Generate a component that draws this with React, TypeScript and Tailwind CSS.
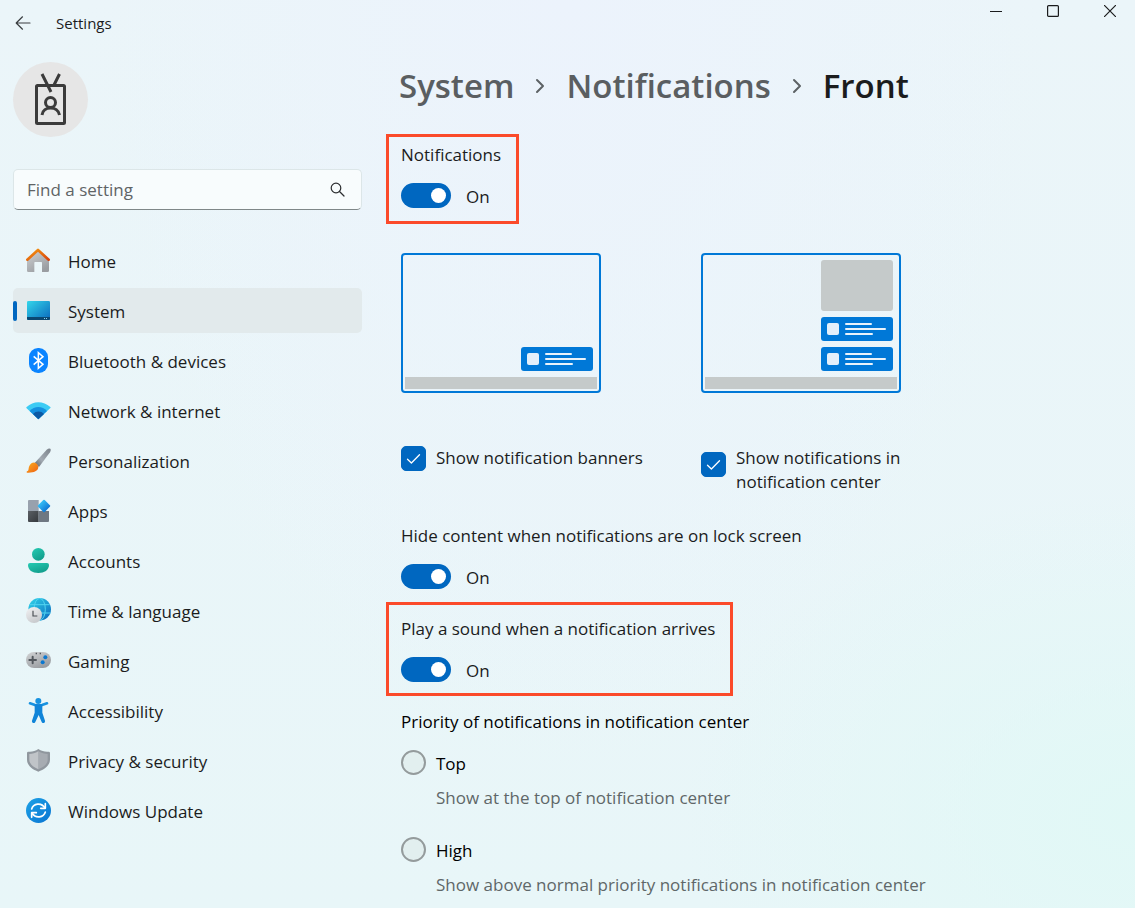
import { useState } from "react";
import type { ReactNode } from "react";

const navItems: { label: string; icon: ReactNode }[] = [
  {
    label: "Home",
    icon: (
      <>
        <path d="M3 34 L36 6 L69 34 V68 Q69 72 65 72 H48 V44 Q48 42 46 42 H27 Q25 42 25 44 V72 H7 Q3 72 3 68 Z" fill="url(#grayDown)" />
        <path d="M4 35 L36 6 L68 35" fill="none" stroke="url(#roof)" strokeWidth="8" strokeLinecap="round" strokeLinejoin="round" />
      </>
    ),
  },
  {
    label: "System",
    icon: (
      <>
        <rect x="3" y="9" width="69" height="57" rx="4" fill="url(#screen)" />
        <path d="M3 57 H72 V62 Q72 66 68 66 H7 Q3 66 3 62 Z" fill="#0b4872" />
        <rect x="54" y="60" width="3" height="3" fill="#8fd3ef" />
        <rect x="60" y="60" width="3" height="3" fill="#8fd3ef" />
      </>
    ),
  },
  {
    label: "Bluetooth & devices",
    icon: (
      <>
        <rect x="9" y="0" width="57" height="75" rx="27" fill="#0a84ff" />
        <path d="M23 25 L51 49 L37 61 V14 L51 26 L23 50" fill="none" stroke="#fff" strokeWidth="4.5" strokeLinejoin="miter" />
      </>
    ),
  },
  {
    label: "Network & internet",
    icon: (
      <>
        <path d="M37 64 L1 30 Q0 28 2 27 C22 8 52 8 73 27 Q75 28 73 30 Z" fill="#3bcbf4" />
        <path d="M37 64 L11 39 C25 23 49 23 63 39 Z" fill="#1490df" />
        <path d="M37 64 L21 48 C30 38 45 38 54 48 Z" fill="#0c59a4" />
      </>
    ),
  },
  {
    label: "Personalization",
    icon: (
      <>
        <path d="M26 45 L62 5 Q68 0 73 2 Q76 6 72 13 L39 57 Z" fill="url(#grayBrush)" />
        <path d="M26 44 C32 45 37 51 37 58 C36 70 22 75 3 74 Q0 73 3 70 C9 68 7 62 9 56 C12 48 19 43 26 44 Z" fill="url(#bristle)" />
      </>
    ),
  },
  {
    label: "Apps",
    icon: (
      <>
        <path d="M9 6 H38 V39 H6 V9 Q6 6 9 6 Z" fill="#98a1ad" />
        <path d="M6 39 H38 V72 H9 Q6 72 6 69 Z" fill="url(#grayDark)" />
        <path d="M38 39 H69 V69 Q69 72 66 72 H38 Z" fill="#6f7882" />
        <rect x="40" y="10" width="28" height="28" rx="3" transform="rotate(45 54 24)" fill="url(#blue)" />
      </>
    ),
  },
  {
    label: "Accounts",
    icon: (
      <>
        <circle cx="37" cy="19" r="19" fill="url(#teal)" />
        <path d="M12 45 H63 Q69 45 69 51 C69 66 55 75 37 75 C19 75 6 66 6 51 Q6 45 12 45 Z" fill="url(#teal)" />
      </>
    ),
  },
  {
    label: "Time & language",
    icon: (
      <>
        <circle cx="41" cy="34" r="34" fill="url(#screen)" />
        <g fill="none" stroke="#52d5f0" strokeWidth="3">
          <ellipse cx="41" cy="34" rx="17" ry="33" />
          <path d="M11 20 H71 M8 45 H74" />
        </g>
        <circle cx="24" cy="51" r="24" fill="url(#clock)" />
        <path d="M21 38 V54 H34" fill="none" stroke="#4b4f54" strokeWidth="3.5" />
      </>
    ),
  },
  {
    label: "Gaming",
    icon: (
      <>
        <rect x="0" y="12" width="75" height="48" rx="24" fill="url(#grayDown)" />
        <path d="M20 26 V46 M10 36 H30" stroke="#52575d" strokeWidth="6" strokeLinecap="round" />
        <circle cx="58" cy="28" r="6" fill="#0b78d0" />
        <circle cx="50" cy="43" r="6" fill="#0b78d0" />
        <path d="M31 14 v5 M43 14 v5" stroke="#52575d" strokeWidth="4" />
      </>
    ),
  },
  {
    label: "Accessibility",
    icon: (
      <>
        <circle cx="37" cy="9" r="9" fill="#1792e0" />
        <path d="M12 16 L27 21 Q37 24 48 21 L63 16" fill="none" stroke="#1792e0" strokeWidth="8" strokeLinecap="round" />
        <path d="M26 19 H49 V44 L57 68 Q58 73 54 75 Q49 76 47 72 L38 51 L28 72 Q26 76 21 75 Q17 73 18 68 L26 44 Z" fill="#0f84d8" />
      </>
    ),
  },
  {
    label: "Privacy & security",
    icon: (
      <>
        <path d="M37 3 C47 10 58 12 68 11 Q72 11 72 15 V35 C72 52 56 64 37 71 C18 64 3 52 3 35 V15 Q3 11 7 11 C17 12 28 10 37 3 Z" fill="#90979e" />
        <path d="M37 10 C47 16 56 18 65 18 V35 C65 48 53 57 37 64 Z" fill="#a7acb2" />
        <path d="M37 10 C28 16 19 18 10 18 V35 C10 48 22 57 37 64 Z" fill="#c0c4c8" />
      </>
    ),
  },
  {
    label: "Windows Update",
    icon: (
      <>
        <circle cx="37.5" cy="37.5" r="37.5" fill="url(#update)" />
        <g fill="none" stroke="#fff" strokeWidth="5" strokeLinecap="round" strokeLinejoin="round">
          <path d="M17 33 C22 16 46 12 57 30" />
          <path d="M58 17 V31 H44" />
          <path d="M58 42 C53 59 29 63 18 45" />
          <path d="M17 58 V44 H31" />
        </g>
      </>
    ),
  },
];

// Gradients shared by the navigation icons
function IconGradients() {
  return (
    <svg width="0" height="0" className="absolute" aria-hidden="true">
      <defs>
        <linearGradient id="grayDown" x1="0" y1="0" x2="0.6" y2="1">
          <stop offset="0" stopColor="#d2d4d6" />
          <stop offset="1" stopColor="#9a9da1" />
        </linearGradient>
        <linearGradient id="roof" x1="0" y1="0" x2="1" y2="1">
          <stop offset="0" stopColor="#f59a12" />
          <stop offset="1" stopColor="#d8410b" />
        </linearGradient>
        <linearGradient id="screen" x1="0" y1="0" x2="1" y2="1">
          <stop offset="0" stopColor="#33d6ea" />
          <stop offset="1" stopColor="#0a68bd" />
        </linearGradient>
        <linearGradient id="grayBrush" x1="1" y1="0" x2="0" y2="1">
          <stop offset="0" stopColor="#7b838b" />
          <stop offset="0.6" stopColor="#a3abb3" />
          <stop offset="1" stopColor="#5a6168" />
        </linearGradient>
        <linearGradient id="bristle" x1="0" y1="0" x2="1" y2="1">
          <stop offset="0" stopColor="#fbb01f" />
          <stop offset="1" stopColor="#ee5f12" />
        </linearGradient>
        <linearGradient id="grayDark" x1="0" y1="0" x2="1" y2="1">
          <stop offset="0" stopColor="#5a5f64" />
          <stop offset="1" stopColor="#34383c" />
        </linearGradient>
        <linearGradient id="blue" x1="0" y1="0.5" x2="1" y2="0.5">
          <stop offset="0" stopColor="#33bdf5" />
          <stop offset="1" stopColor="#0f78d6" />
        </linearGradient>
        <linearGradient id="teal" x1="0" y1="0" x2="0.6" y2="1">
          <stop offset="0" stopColor="#25cbb3" />
          <stop offset="1" stopColor="#129e8c" />
        </linearGradient>
        <linearGradient id="clock" x1="0" y1="0" x2="0.5" y2="1">
          <stop offset="0" stopColor="#f3f3f4" />
          <stop offset="1" stopColor="#c9cbce" />
        </linearGradient>
        <linearGradient id="update" x1="0" y1="0" x2="1" y2="1">
          <stop offset="0" stopColor="#1ea2e6" />
          <stop offset="1" stopColor="#0874d2" />
        </linearGradient>
      </defs>
    </svg>
  );
}

function Toggle({ id, label, className = "" }: { id: string; label: string; className?: string }) {
  const [on, setOn] = useState(true);
  return (
    <div className={`w-fit ${className}`}>
      <label htmlFor={id} className="block">
        {label}
      </label>
      <div className="mt-4 flex h-[25px] items-center gap-[15px]">
        <input
          id={id}
          type="checkbox"
          role="switch"
          checked={on}
          onChange={(e) => setOn(e.target.checked)}
          className="flex h-[25px] w-[50px] appearance-none items-center rounded-full bg-[#8a9094] px-[5px] after:size-[15px] after:rounded-full after:bg-white checked:justify-end checked:bg-[#0067c0]"
        />
        <span className="pt-0.5">{on ? "On" : "Off"}</span>
      </div>
    </div>
  );
}

function Check({ id, label, boxClass = "" }: { id: string; label: string; boxClass?: string }) {
  return (
    <div className="flex w-[250px] items-start gap-[10px]">
      <span className={`grid shrink-0 ${boxClass}`}>
        <input
          id={id}
          type="checkbox"
          defaultChecked
          className="peer col-start-1 row-start-1 size-[25px] appearance-none rounded-[5px] border border-[#8a9094] checked:border-[#0067c0] checked:bg-[#0067c0]"
        />
        <svg
          viewBox="0 0 25 25"
          className="pointer-events-none invisible col-start-1 row-start-1 size-[25px] peer-checked:visible"
          fill="none"
          stroke="#fff"
          strokeWidth="1.3"
          strokeLinecap="round"
          strokeLinejoin="round"
        >
          <path d="M6.5 13.2 L10.4 17 L18.5 8.8" />
        </svg>
      </span>
      <label htmlFor={id}>{label}</label>
    </div>
  );
}

function Banner({ y }: { y: number }) {
  return (
    <g>
      <rect x="120" y={y} width="72" height="24" rx="3" fill="#0078d7" />
      <rect x="126" y={y + 6} width="12" height="12" rx="2" fill="#e3effa" />
      <g fill="#e9f3fb">
        <rect x="144" y={y + 6} width="27" height="2" rx="1" />
        <rect x="144" y={y + 11} width="41" height="2" rx="1" />
        <rect x="144" y={y + 16} width="28" height="2" rx="1" />
      </g>
    </g>
  );
}

function ScreenPreview({ center = false }: { center?: boolean }) {
  return (
    <svg viewBox="0 0 200 140" className="h-[140px] w-[200px]" aria-hidden="true">
      <rect x="1" y="1" width="198" height="138" rx="3" fill="none" stroke="#0078d7" strokeWidth="2" />
      <rect x="4" y="124" width="192" height="12" fill="#c5caca" />
      {center && <rect x="120" y="7" width="72" height="51" rx="3" fill="#c5caca" />}
      {center && <Banner y={64} />}
      <Banner y={94} />
    </svg>
  );
}

function Priority({ id, label, note }: { id: string; label: string; note: string }) {
  return (
    <div>
      <div className="flex h-[25px] items-center gap-[10px]">
        <input
          id={id}
          type="radio"
          name="priority"
          aria-describedby={`${id}-note`}
          className="size-[25px] appearance-none rounded-full border-2 border-[#949b9c] bg-[#e2efef] checked:border-[7px] checked:border-[#0067c0]"
        />
        <label htmlFor={id} className="pt-0.5 text-black">
          {label}
        </label>
      </div>
      <p id={`${id}-note`} className="mt-[11px] pl-[35px] text-[#5f6768]">
        {note}
      </p>
    </div>
  );
}

function Chevron() {
  return (
    <svg width="10" height="16" viewBox="0 0 10 16" fill="none" stroke="#5d6265" strokeWidth="2" strokeLinecap="round" strokeLinejoin="round" aria-hidden="true">
      <path d="M2 2 L8 8 L2 14" />
    </svg>
  );
}

export default function App() {
  return (
    <div className="flex min-h-screen flex-col bg-[radial-gradient(ellipse_at_100%_90%,#e1f8f6_0%,transparent_28%),radial-gradient(ellipse_at_50%_0%,#ecf3fc_0%,transparent_60%),linear-gradient(to_bottom,#ebf5f9,#e8f6f8)] font-['Open_Sans','Noto_Sans',sans-serif] text-[17px] leading-6 text-[#1b1c1d]">
      <IconGradients />
      {/* Title bar */}
      <header className="flex h-[45px] items-start justify-between">
        <div className="flex h-[45px] items-center gap-[25px] pl-[15px]">
          <button type="button" aria-label="Back">
            <svg width="16" height="16" viewBox="0 0 16 16" fill="none" stroke="#3a3d40" strokeWidth="1.2" strokeLinecap="round" strokeLinejoin="round">
              <path d="M15 8 H1.2 M7.5 1.8 L1.2 8 L7.5 14.2" />
            </svg>
          </button>
          <span className="text-[15px]">Settings</span>
        </div>
        <div className="flex h-[22px] items-center gap-[45px] pr-[19px]">
          <button type="button" aria-label="Minimize">
            <svg width="12" height="12" viewBox="0 0 12 12" stroke="#1b1c1d">
              <path d="M0 6.5 H12" />
            </svg>
          </button>
          <button type="button" aria-label="Maximize">
            <svg width="12" height="12" viewBox="0 0 12 12" fill="none" stroke="#1b1c1d" strokeWidth="1.2">
              <rect x="0.6" y="0.6" width="10.8" height="10.8" rx="1" />
            </svg>
          </button>
          <button type="button" aria-label="Close">
            <svg width="12" height="12" viewBox="0 0 12 12" stroke="#1b1c1d" strokeWidth="1.2">
              <path d="M0 0 L12 12 M12 0 L0 12" />
            </svg>
          </button>
        </div>
      </header>

      <div className="flex">
        {/* Sidebar */}
        <aside className="w-[375px] shrink-0 px-[13px] pt-[17px]">
          <div className="flex size-[75px] items-center justify-center rounded-full bg-[#e6e6e6]">
            <svg width="36" height="54" viewBox="0 0 36 54" fill="none" stroke="#3b3b3b" strokeWidth="3" aria-hidden="true">
              <rect x="3.5" y="12.5" width="28" height="38" rx="1" />
              <path d="M9 1 L18 19 M26.5 1 L21 12" />
              <circle cx="17.5" cy="29.5" r="5" />
              <path d="M9 42 C10 32.5 25 32.5 26.5 42" />
            </svg>
          </div>

          <div className="mt-8 flex h-[41px] items-center rounded-[5px] border border-b-[#7f8788] border-[#dce6e8] bg-[#f8fcfd] pr-4 pl-[13px]">
            <input
              type="search"
              aria-label="Find a setting"
              placeholder="Find a setting"
              className="min-w-0 flex-1 bg-transparent outline-none placeholder:text-[#5f6466]"
            />
            <svg width="15" height="15" viewBox="0 0 15 15" fill="none" stroke="#2b2d2f" strokeWidth="1.2" strokeLinecap="round" aria-hidden="true">
              <circle cx="6" cy="6" r="4.8" />
              <path d="M9.5 9.5 L14 14" />
            </svg>
          </div>

          <nav className="mt-7 flex flex-col gap-[5px]">
            {navItems.map(({ label, icon }) => {
              const active = label === "System";
              return (
                <a
                  key={label}
                  href="#"
                  aria-current={active ? "page" : undefined}
                  className={`relative flex h-[45px] items-center gap-[17px] rounded-[5px] pl-[13px] ${active ? "bg-[#e2eaec]" : ""}`}
                >
                  {active && <span className="absolute left-0 h-5 w-1 rounded-full bg-[#0067c0]" />}
                  <svg viewBox="0 0 75 75" className="size-[25px]" aria-hidden="true">
                    {icon}
                  </svg>
                  <span className="pt-0.5">{label}</span>
                </a>
              );
            })}
          </nav>
        </aside>

        {/* Content */}
        <main className="min-w-0 flex-1 pt-[19px] pb-[11px] pl-[11px]">
          <h1 className="flex h-[44px] items-center gap-[21px] pl-[13px] text-[33px] font-semibold text-[#5a5e61]">
            <a href="#">System</a>
            <Chevron />
            <a href="#">Notifications</a>
            <Chevron />
            <span className="text-[#1b1c1d]">Front</span>
          </h1>

          <Toggle
            id="notifications"
            label="Notifications"
            className="mt-[26px] border-3 border-[#fb4a2a] pt-[6px] pr-[15px] pb-[13px] pl-3"
          />

          <div className="mt-[29px] flex gap-[100px] pl-[15px]">
            <ScreenPreview />
            <ScreenPreview center />
          </div>

          <div className="mt-[53px] flex items-start gap-[50px] pl-[15px]">
            <Check id="banners" label="Show notification banners" />
            <Check id="center" label="Show notifications in notification center" boxClass="mt-[6px]" />
          </div>

          <Toggle id="lock-screen" label="Hide content when notifications are on lock screen" className="mt-[30px] pl-[15px]" />

          <Toggle
            id="sound"
            label="Play a sound when a notification arrives"
            className="mt-[13px] border-3 border-[#fb4a2a] pt-3 pr-[15px] pb-[11px] pl-3"
          />

          <fieldset className="mt-[14px] pl-[15px]">
            <legend className="text-black">Priority of notifications in notification center</legend>
            <div className="mt-4 flex flex-col gap-[27px]">
              <Priority id="top" label="Top" note="Show at the top of notification center" />
              <Priority id="high" label="High" note="Show above normal priority notifications in notification center" />
            </div>
          </fieldset>
        </main>
      </div>
    </div>
  );
}
